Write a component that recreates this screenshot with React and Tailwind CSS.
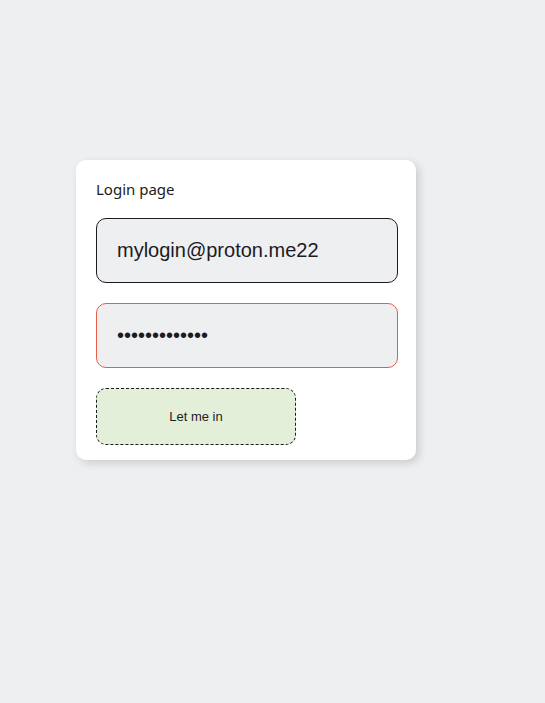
export default function App() {
  return (
    <div className="min-h-[703px] bg-[#eeeff1] pt-[160px] pl-[76px]">
      <div className="w-[340px] rounded-[10px] bg-white pt-[17px] pb-[15px] pl-[20px] shadow-[3px_3px_8px_rgba(0,0,0,0.15)]">
        <div className="font-['Noto_Sans',sans-serif] text-[15px] leading-[24px] text-[#1c1b22]">
          Login page
        </div>
        <div className="mt-[17px] flex flex-col gap-[20px] font-['Liberation_Sans',Arial,sans-serif]">
          <input
            readOnly
            type="text"
            value="mylogin@proton.me22"
            className="h-[65px] w-[302px] rounded-[10px] border border-[#1c1b22] bg-[#eeeff1] px-[20px] text-[20px] text-[#1c1b22] outline-none"
          />
          <input
            readOnly
            type="password"
            value="1234567890123"
            className="h-[65px] w-[302px] rounded-[10px] border border-[#ea5d4a] bg-[#eeeff1] px-[20px] text-[20px] text-[#1c1b22] outline-none"
          />
          <button className="h-[57px] w-[200px] rounded-[10px] border border-dashed border-[#1c1b22] bg-[#e3efd9] text-[13px] text-[#1c1b22]">
            Let me in
          </button>
        </div>
      </div>
    </div>
  );
}
